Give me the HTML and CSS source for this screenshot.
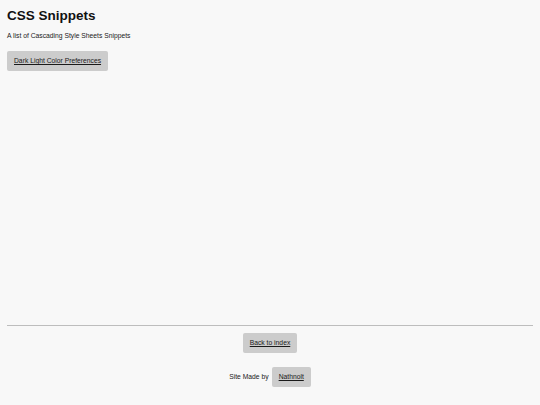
FILE: index.html
```html
<!DOCTYPE html>
<html lang="en">
<head>
<meta charset="utf-8">
<title>CSS Snippets</title>
<link rel="stylesheet" href="styles.css">
</head>
<body>
<div class="page">
  <main class="main">
    <h1 class="title">CSS Snippets</h1>
    <p class="lead">A list of Cascading Style Sheets Snippets</p>
    <nav class="links">
      <a class="btn" href="#">Dark Light Color Preferences</a>
    </nav>
  </main>
  <footer class="footer">
    <hr class="rule">
    <div class="back"><a class="btn" href="#">Back to index</a></div>
    <p class="credit">Site Made by <a class="btn" href="#">Nathnolt</a></p>
  </footer>
</div>
</body>
</html>
```
FILE: styles.css
```css
html, body {
  margin: 0;
  padding: 0;
  background: #f8f8f8;
}
body {
  font-family: "Liberation Sans", Arial, sans-serif;
  color: #1a1a1a;
  font-size: 6.75px;
  line-height: 8px;
}
.page {
  box-sizing: border-box;
  min-height: 405px;
  padding: 7px 7px 18px;
  display: flex;
  flex-direction: column;
}
.main {
  flex: 1;
}
.title {
  margin: 1px 0 0;
  font-size: 13.5px;
  line-height: 16px;
  font-weight: bold;
  color: #111;
}
.lead {
  margin: 8px 0 0;
}
.links {
  margin-top: 11px;
  display: flex;
}
.btn {
  display: inline-block;
  background: #cccccc;
  color: #1a1a1a;
  text-decoration: underline;
  padding: 6px 7px;
  border-radius: 2px;
  line-height: 8px;
}
.footer {
  display: flex;
  flex-direction: column;
  align-items: center;
}
.rule {
  align-self: stretch;
  margin: 0;
  border: 0;
  border-top: 1px solid #bdbdbd;
  height: 0;
}
.back {
  margin-top: 7px;
}
.credit {
  margin: 14px 0 0;
  display: flex;
  align-items: center;
  gap: 3px;
}
```
